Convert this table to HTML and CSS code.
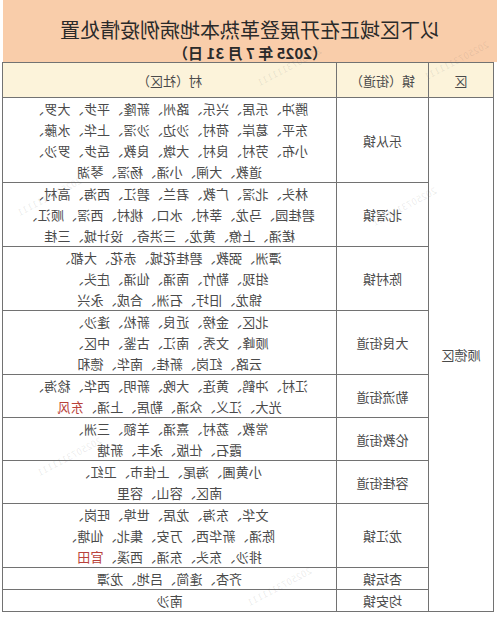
FILE: index.html
```html
<!DOCTYPE html>
<html lang="zh-CN">
<head>
<meta charset="utf-8">
<link rel="stylesheet" href="styles.css">
</head>
<body>
<div class="page">
  <header class="banner">
    <div class="title">以下区域正在开展登革热本地病例疫情处置</div>
    <div class="date">（2025 年 7 月 31 日）</div>
  </header>
  <table class="grid">
    <colgroup>
      <col class="c-dist"><col class="c-town"><col class="c-vill">
    </colgroup>
    <thead>
      <tr><th>区</th><th>镇（街道）</th><th>村（社区）</th></tr>
    </thead>
    <tbody>
      <tr class="r4">
        <td rowspan="10" class="dist">顺德区</td>
        <td>乐从镇</td>
        <td class="vill">腾冲、乐居、兴乐、路州、新隆、平步、大罗、<br>东平、葛岸、荷村、沙边、沙滘、上华、水藤、<br>小布、劳村、良村、大墩、良教、岳步、罗沙、<br>道教、大闸、小涌、杨滘、琴湖</td>
      </tr>
      <tr>
        <td>北滘镇</td>
        <td class="vill">林头、北滘、广教、君兰、碧江、西海、高村、<br>碧桂园、马龙、莘村、水口、桃村、西滘、顺江、<br>槎涌、上僚、黄龙、三洪奇、设计城、三桂</td>
      </tr>
      <tr>
        <td>陈村镇</td>
        <td class="vill">潭洲、弼教、碧桂花城、赤花、大都、<br>绀现、勒竹、南涌、仙涌、庄头、<br>锦龙、旧圩、石洲、合成、永兴</td>
      </tr>
      <tr>
        <td>大良街道</td>
        <td class="vill">北区、金榜、近良、新松、逢沙、<br>顺峰、文秀、南江、古鉴、中区、<br>云路、红岗、新桂、南华、德和</td>
      </tr>
      <tr>
        <td>勒流街道</td>
        <td class="vill">江村、冲鹤、黄连、大晚、新明、西华、稔海、<br>光大、江义、众涌、勒居、上涌、<span class="hot">东风</span></td>
      </tr>
      <tr>
        <td>伦教街道</td>
        <td class="vill">常教、荔村、熹涌、羊额、三洲、<br>霞石、仕版、永丰、新塘</td>
      </tr>
      <tr>
        <td>容桂街道</td>
        <td class="vill">小黄圃、海尾、上佳市、卫红、<br>南区、容山、容里</td>
      </tr>
      <tr>
        <td>龙江镇</td>
        <td class="vill">文华、东海、龙居、世埠、旺岗、<br>陈涌、新华西、万安、集北、仙塘、<br>排沙、东头、东涌、西溪、<span class="hot">官田</span></td>
      </tr>
      <tr>
        <td>杏坛镇</td>
        <td class="vill">齐杏、逢简、吕地、龙潭</td>
      </tr>
      <tr>
        <td>均安镇</td>
        <td class="vill">南沙</td>
      </tr>
    </tbody>
  </table>
  <div class="wm wm1">2025073111111</div>
  <div class="wm wm2">2025073111111</div>
  <div class="wm wm3">2025073111111</div>
  <div class="wm wm4">2025073111111</div>
  <div class="wm wm5">2025073111111</div>
  <div class="wm wm6">2025073111111</div>
</div>
</body>
</html>
```

FILE: styles.css
```css
html, body {
  margin: 0;
  padding: 0;
  background: #ffffff;
}

.page {
  position: relative;
  width: 500px;
  height: 617px;
  overflow: hidden;
  transform: scaleX(-1);
  font-family: "Noto Sans CJK SC", "Noto Sans", sans-serif;
  color: #4a4a4a;
}

.banner {
  margin: 0 3px 0 3px;
  height: 62px;
  padding-top: 16px;
  box-sizing: border-box;
  background: #f9cdaa;
  text-align: center;
}

.title {
  font-size: 20px;
  line-height: 28px;
  color: #2a2a2a;
}

.date {
  font-size: 15px;
  line-height: 18px;
  font-weight: bold;
  color: #2a2a2a;
}

.grid {
  margin: 0 3px 0 6px;
  width: 491px;
  border-collapse: collapse;
  table-layout: fixed;
  font-size: 13px;
}

.c-dist { width: 65px; }
.c-town { width: 92px; }
.c-vill { width: 334px; }

.grid th,
.grid td {
  border: 1px solid #727272;
  padding: 0;
  text-align: center;
  vertical-align: middle;
  font-weight: normal;
  line-height: 21px;
}

.grid thead th {
  background: #fcf3da;
  height: 34px;
}

.vill {
  letter-spacing: 0.2px;
}

.hot {
  color: #b9423a;
}

.wm {
  position: absolute;
  font-size: 9px;
  color: rgba(90, 90, 90, 0.13);
  transform: rotate(28deg);
  white-space: nowrap;
  pointer-events: none;
  letter-spacing: 0.5px;
}

.wm1 { left: 8px; top: 54px; }
.wm2 { left: 175px; top: 60px; }
.wm3 { left: 60px; top: 200px; }
.wm4 { left: 415px; top: 190px; }
.wm5 { left: 395px; top: 450px; }
.wm6 { left: 185px; top: 580px; }
```
